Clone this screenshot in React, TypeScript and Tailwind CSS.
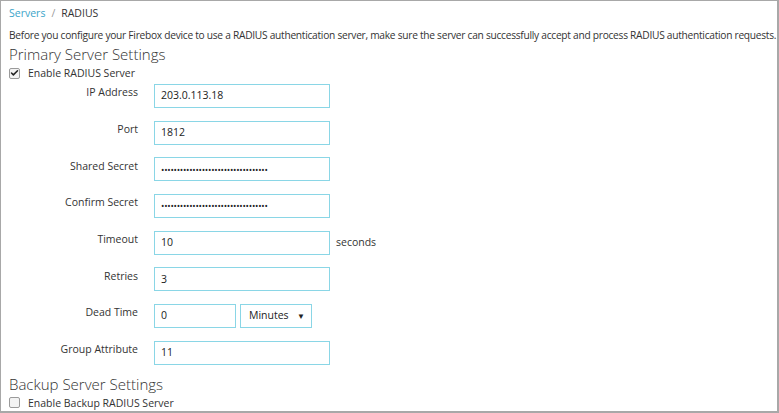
import { Check } from 'lucide-react'

const fields = [
  { label: 'IP Address', value: '203.0.113.18' },
  { label: 'Port', value: '1812' },
  { label: 'Shared Secret', value: '••••••••••••••••••••••••••••••••••', secret: true },
  { label: 'Confirm Secret', value: '••••••••••••••••••••••••••••••••••', secret: true },
  { label: 'Timeout', value: '10', suffix: 'seconds' },
  { label: 'Retries', value: '3' },
]

function Checkbox({ checked }: { checked?: boolean }) {
  return (
    <span className="flex h-[11px] w-[11px] items-center justify-center rounded-[2px] border border-[#9a9a9a] bg-[#f3f3f3]">
      {checked && <Check className="h-[10px] w-[10px] text-[#222]" strokeWidth={4} />}
    </span>
  )
}

function Field({ value, secret, className = 'w-[176px]' }: { value: string; secret?: boolean; className?: string }) {
  return (
    <div
      className={`flex h-[24px] items-center border border-[#8ad6e6] bg-white px-[6px] text-[#222] ${className} ${
        secret ? 'text-[9px] tracking-[-0.25px]' : 'text-[10.5px]'
      }`}
    >
      {value}
    </div>
  )
}

function Row({ label, children }: { label: string; children: React.ReactNode }) {
  return (
    <div className="flex h-[24px] items-center">
      <div className="-mt-[6px] w-[129px] text-right text-[10.5px] text-[#333]">{label}</div>
      <div className="ml-[16px] flex items-center">{children}</div>
    </div>
  )
}

export default function App() {
  return (
    <div
      className="h-[413px] w-[779px] overflow-hidden border-b-2 border-l border-r-2 border-t border-[#a8a8a8] bg-white"
      style={{ fontFamily: '"Open Sans", "Liberation Sans", sans-serif' }}
    >
      <div className="px-[8px] pt-[4px]">
        {/* Breadcrumb */}
        <div className="flex items-center gap-[6px] text-[10.5px] leading-[16px]">
          <span className="text-[#3aa4c9]">Servers</span>
          <span className="text-[#999]">/</span>
          <span className="text-[#333]">RADIUS</span>
        </div>

        <p className="mt-[6px] whitespace-nowrap text-[10.2px] leading-[16px] tracking-[-0.27px] text-[#333]">
          Before you configure your Firebox device to use a RADIUS authentication server, make sure the server can successfully accept and process RADIUS authentication requests.
        </p>

        <h2 className="mt-[1px] text-[15px] font-light leading-[20px] text-[#333]">Primary Server Settings</h2>
        <label className="mt-[2px] flex items-center gap-[8px] text-[10.5px] leading-[14px] text-[#333]">
          <Checkbox checked />
          Enable RADIUS Server
        </label>

        <div className="mt-[4px] flex flex-col gap-[12.7px]">
          {fields.map((f) => (
            <Row key={f.label} label={f.label}>
              <Field value={f.value} secret={f.secret} />
              {f.suffix && <span className="ml-[6px] text-[10.5px] text-[#333]">{f.suffix}</span>}
            </Row>
          ))}
          <Row label="Dead Time">
            <Field value="0" className="w-[82px]" />
            <div className="ml-[4px] flex h-[24px] w-[72px] items-center justify-between border border-[#8ad6e6] bg-white pl-[8px] pr-[6px] text-[10.5px] text-[#222]">
              Minutes
              <span className="text-[8px]">▼</span>
            </div>
          </Row>
          <Row label="Group Attribute">
            <Field value="11" />
          </Row>
        </div>

        <h2 className="mt-[9px] text-[15px] font-light leading-[20px] text-[#333]">Backup Server Settings</h2>
        <label className="mt-[2px] flex items-center gap-[8px] text-[10.5px] leading-[14px] text-[#333]">
          <Checkbox />
          Enable Backup RADIUS Server
        </label>
      </div>
    </div>
  )
}
